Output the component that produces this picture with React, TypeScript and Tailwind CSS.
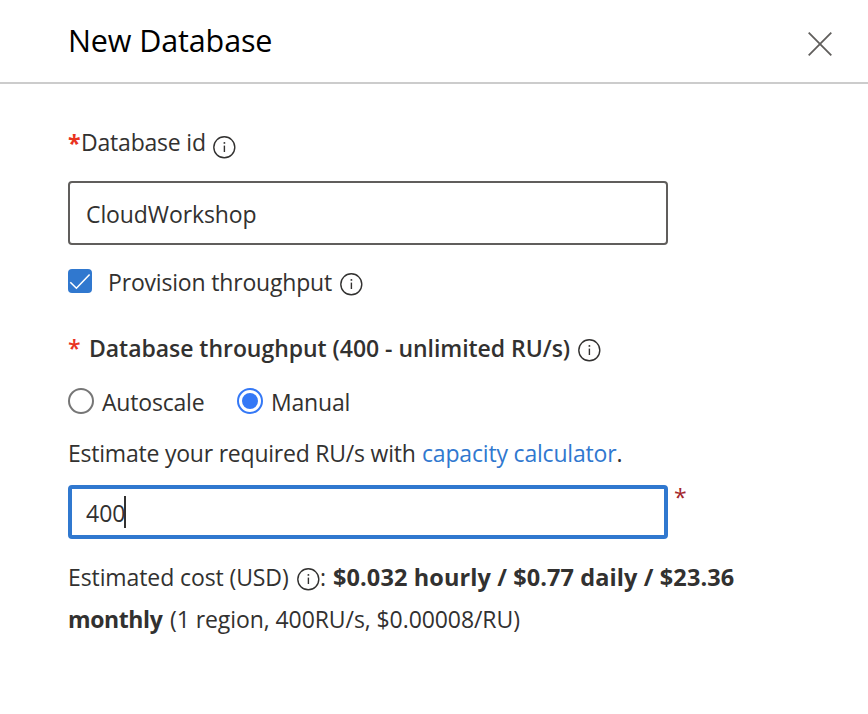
import React from "react";

function Info({ className = "" }: { className?: string }) {
  return (
    <svg viewBox="0 0 24 24" fill="none" className={"h-6 w-6 shrink-0 " + className}>
      <circle cx="12.3" cy="12.3" r="10.5" stroke="#323130" strokeWidth="1.4" />
      <path d="M12.4 10.6V17" stroke="#323130" strokeWidth="1.4" />
      <circle cx="12.4" cy="7.9" r="0.95" fill="#323130" />
    </svg>
  );
}

export default function App() {
  return (
    <div className="h-[714px] w-[868px] overflow-hidden bg-white font-['Open_Sans','Noto_Sans',sans-serif] text-[23px] leading-8 whitespace-nowrap text-[#323130]">
      <header className="flex h-[84px] items-start justify-between border-b-2 border-[#cccccc] pr-9 pl-[68px]">
        <h1 className="pt-[20px] text-[30.5px] leading-10 tracking-[-0.12px] text-black">New Database</h1>
        <svg viewBox="0 0 24 24" fill="none" className="mt-8 h-6 w-6">
          <path d="M0.7 0.7L23.3 23.3M23.3 0.7L0.7 23.3" stroke="#605e5c" strokeWidth="1.8" />
        </svg>
      </header>
      <main className="pl-[68px]">
        <div className="mt-[42px] flex h-8">
          <span className="w-[13px] pt-px font-bold text-[#e9331f]">*</span>
          <span className="w-[131px] tracking-[-0.2px]">Database id</span>
          <Info className="mt-[9px]" />
        </div>
        <div className="mt-[23px] h-16 w-[600px] rounded-[4px] border-2 border-[#605e5c] pt-[15px] pl-4 tracking-[-0.1px]">
          CloudWorkshop
        </div>
        <div className="mt-[21px] flex h-8">
          <svg viewBox="0 0 24 24" fill="none" className="mt-[3px] h-6 w-6">
            <rect width="24" height="24" rx="4" fill="#3078cf" />
            <path d="M2.3 13.2L8.4 19.2L21.6 5.5" stroke="white" strokeWidth="1.6" />
          </svg>
          <span className="ml-4 w-[231px] tracking-[-0.18px]">Provision throughput</span>
          <Info className="mt-[6px]" />
        </div>
        <div className="mt-[34px] flex h-8 font-semibold">
          <span className="w-[21px] text-[#e9331f]">*</span>
          <span className="w-[488px] tracking-[-0.04px]">Database throughput (400 - unlimited RU/s)</span>
          <Info className="mt-[6px]" />
        </div>
        <div className="mt-[22px] flex h-8">
          <span className="mt-[2px] h-[26px] w-[26px] rounded-full border-2 border-[#767676]" />
          <span className="ml-2 w-[135px] tracking-[-0.2px]">Autoscale</span>
          <span className="mt-[2px] flex h-[26px] w-[26px] items-center justify-center rounded-full border-2 border-[#3478f6]">
            <span className="h-4 w-4 rounded-full bg-[#3478f6]" />
          </span>
          <span className="ml-2 tracking-[-0.2px]">Manual</span>
        </div>
        <div className="mt-[19px] flex h-8">
          <span className="w-[354px] tracking-[-0.22px]">Estimate your required RU/s with</span>
          <span className="tracking-[-0.18px] text-[#3078cf]">capacity calculator</span>
          <span>.</span>
        </div>
        <div className="mt-4 flex h-[54px]">
          <div className="flex w-[600px] rounded-[4px] border-4 border-[#3078cf] pt-2 pl-[14px]">
            <span className="w-[38px]">400</span>
            <span className="-mt-px h-8 w-[2px] bg-[#323130]" />
          </div>
          <span className="-mt-1 ml-[6px] text-[#a4262c]">*</span>
        </div>
        <div className="mt-[17px] flex h-[42px] leading-[42px]">
          <span className="w-[228px] tracking-[-0.1px]">Estimated cost (USD)</span>
          <Info className="mt-[11px]" />
          <span className="w-[13px]">:</span>
          <span className="text-[23.5px] font-bold tracking-[0.1px]">$0.032 hourly / $0.77 daily / $23.36</span>
        </div>
        <div className="flex h-[42px] leading-[42px]">
          <span className="w-[102px] font-bold tracking-[-0.4px]">monthly</span>
          <span className="tracking-[-0.08px]">(1 region, 400RU/s, $0.00008/RU)</span>
        </div>
      </main>
    </div>
  );
}
